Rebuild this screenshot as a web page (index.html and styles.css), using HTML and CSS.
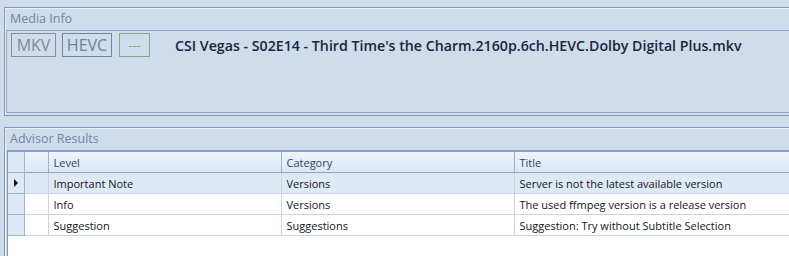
FILE: index.html
```html
<!DOCTYPE html>
<html>
<head>
<meta charset="utf-8">
<link rel="stylesheet" href="styles.css">
</head>
<body>
<div class="page">
  <section class="group media">
    <div class="group-title">Media Info</div>
    <div class="media-panel">
      <div class="media-row">
        <span class="badge badge-mkv">MKV</span>
        <span class="badge badge-hevc">HEVC</span>
        <span class="badge badge-none">---</span>
        <span class="file-name">CSI Vegas - S02E14 - Third Time's the Charm.2160p.6ch.HEVC.Dolby Digital Plus.mkv</span>
      </div>
    </div>
  </section>
  <section class="group advisor">
    <div class="group-title">Advisor Results</div>
    <div class="grid">
      <table class="results">
        <colgroup>
          <col class="c-rowhead"><col class="c-icon"><col class="c-level"><col class="c-cat"><col class="c-title">
        </colgroup>
        <thead>
          <tr><th class="rowhead"></th><th></th><th>Level</th><th>Category</th><th>Title</th></tr>
        </thead>
        <tbody>
          <tr class="current"><td class="rowhead"><span class="arrow"></span></td><td></td><td>Important Note</td><td>Versions</td><td>Server is not the latest available version</td></tr>
          <tr><td class="rowhead"></td><td></td><td>Info</td><td>Versions</td><td>The used ffmpeg version is a release version</td></tr>
          <tr><td class="rowhead"></td><td></td><td>Suggestion</td><td>Suggestions</td><td>Suggestion: Try without Subtitle Selection</td></tr>
        </tbody>
      </table>
    </div>
  </section>
</div>
</body>
</html>
```

FILE: styles.css
```css
html, body {
  margin: 0;
  padding: 0;
}
body {
  background: #cfdcec;
  width: 789px;
  height: 256px;
  overflow: hidden;
  font-family: "Open Sans", "Noto Sans", sans-serif;
}
.page {
  width: 785px;
  padding: 7px 0 0 4px;
  display: flex;
  flex-direction: column;
  gap: 11px;
  overflow: hidden;
}
.group {
  border: 1px solid #8497b5;
  border-right: none;
  box-shadow: inset 1px 1px 0 #e9f0f8;
}
.group-title {
  height: 22px;
  line-height: 21px;
  padding-left: 5px;
  font-size: 12.5px;
  color: #7184a2;
}
.media {
  height: 107px;
  display: flex;
  flex-direction: column;
}
.media-panel {
  flex: 1;
  margin: 0 0 2px 1px;
  border-top: 1px solid #8fa5c4;
  border-left: 1px solid #97aac6;
  border-bottom: 1px solid #8fa5c4;
  padding: 2px 0 0 4px;
}
.media-row {
  display: flex;
  align-items: center;
  gap: 6px;
}
.badge {
  box-sizing: border-box;
  height: 24px;
  line-height: 22px;
  text-align: center;
  font-size: 16px;
  border: 1px solid;
}
.badge-mkv {
  width: 45px;
  color: #7f8893;
  border-color: #8d8d8d;
}
.badge-hevc {
  width: 50px;
  color: #6a819f;
  border-color: #6f85a2;
}
.badge-none {
  width: 31px;
  margin-left: 1px;
  color: #78a378;
  border-color: #86aa86;
  font-size: 13px;
}
.file-name {
  margin-left: 19px;
  font-size: 14.2px;
  font-weight: 600;
  color: #1a2541;
  white-space: nowrap;
}
.advisor {
  height: 128px;
  border-bottom: none;
  display: flex;
  flex-direction: column;
}
.grid {
  flex: 1;
  margin-left: 2px;
  background: #ffffff;
  border-top: 2px solid #8aa1c2;
  border-left: 1px solid #8599b6;
  overflow: hidden;
}
.results {
  border-collapse: collapse;
  table-layout: fixed;
  width: 782px;
  font-size: 11px;
}
.c-rowhead { width: 16px; }
.c-icon { width: 24px; }
.c-level { width: 233px; }
.c-cat { width: 233px; }
.c-title { width: 276px; }
.results th {
  height: 20px;
  padding: 0 0 0 5px;
  text-align: left;
  font-weight: normal;
  color: #27446a;
  background: linear-gradient(#eef4fc, #dce7f5);
  border-right: 1px solid #9fb3cf;
  border-bottom: 1px solid #8ea3c2;
}
.results td {
  height: 20px;
  padding: 0 0 0 5px;
  color: #14141f;
  border-right: 1px solid #c3d6ee;
  border-bottom: 1px solid #c3d6ee;
  white-space: nowrap;
}
.results th:last-child,
.results td:last-child {
  border-right: none;
}
.results td.rowhead,
.results th.rowhead {
  padding: 0;
  background: #dfe9f5;
  border-right: 1px solid #9eb3d0;
  border-bottom: 1px solid #9eb3d0;
}
.results tr.current td {
  background: #dfe9f5;
}
.arrow {
  display: block;
  width: 0;
  height: 0;
  margin-left: 6px;
  border-top: 4px solid transparent;
  border-bottom: 4px solid transparent;
  border-left: 4px solid #111111;
}
```
